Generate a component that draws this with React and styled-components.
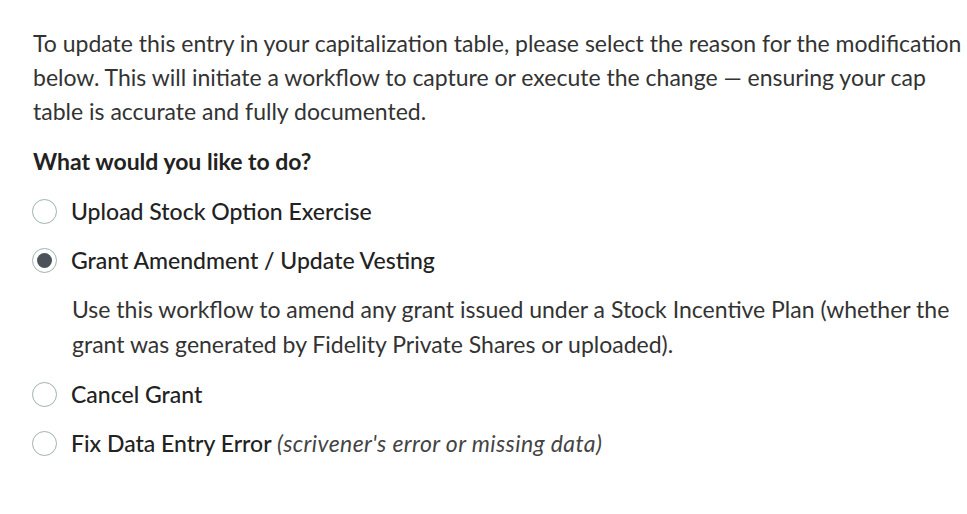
import React, { useState } from "react";
import styled, { createGlobalStyle } from "styled-components";

const GlobalStyle = createGlobalStyle`
  body {
    margin: 0;
    background: #ffffff;
    font-family: "Lato", "Open Sans", sans-serif;
    color: #333333;
  }
`;

const Container = styled.div`
  padding: 26px 0 0 33px;
  width: 930px;
`;

const Intro = styled.p`
  margin: 0;
  font-size: 23px;
  line-height: 34px;
  color: #333333;
`;

const Question = styled.h3`
  margin: 16px 0 0;
  font-size: 23px;
  line-height: 34px;
  font-weight: 700;
  color: #222222;
`;

const OptionList = styled.div`
  display: flex;
  flex-direction: column;
  margin-top: 16px;
`;

const OptionRow = styled.label`
  display: flex;
  align-items: center;
  gap: 14px;
  height: 34px;
  margin-bottom: 15px;
  cursor: pointer;
  font-size: 23px;
  font-weight: 500;
  color: #222222;
`;

const Radio = styled.span`
  box-sizing: border-box;
  width: 25px;
  height: 25px;
  flex-shrink: 0;
  margin-left: -1px;
  border-radius: 50%;
  border: 1.5px solid #9fb1b1;
  background: #ffffff;
  display: flex;
  align-items: center;
  justify-content: center;

  &::after {
    content: "";
    width: 15px;
    height: 15px;
    border-radius: 50%;
    background: #4b5259;
    display: ${(props) => (props.checked ? "block" : "none")};
  }
`;

const Hint = styled.em`
  color: #444444;
  font-style: italic;
  font-weight: 400;
  letter-spacing: 0.4px;
`;

const Description = styled.p`
  margin: 0 0 15px 39px;
  font-size: 23px;
  line-height: 35px;
  color: #333333;
`;

const options = [
  { id: "exercise", label: "Upload Stock Option Exercise" },
  {
    id: "amend",
    label: "Grant Amendment / Update Vesting",
    description:
      "Use this workflow to amend any grant issued under a Stock Incentive Plan (whether the grant was generated by Fidelity Private Shares or uploaded).",
  },
  { id: "cancel", label: "Cancel Grant" },
  {
    id: "fix",
    label: "Fix Data Entry Error",
    hint: "(scrivener's error or missing data)",
  },
];

const App = () => {
  const [selected, setSelected] = useState("amend");

  return (
    <>
      <GlobalStyle />
      <Container>
        <Intro>
          To update this entry in your capitalization table, please select the
          reason for the modification below. This will initiate a workflow to
          capture or execute the change — ensuring your cap table is accurate
          and fully documented.
        </Intro>
        <Question>What would you like to do?</Question>
        <OptionList>
          {options.map((opt) => (
            <React.Fragment key={opt.id}>
              <OptionRow onClick={() => setSelected(opt.id)}>
                <Radio checked={selected === opt.id} />
                <span>
                  {opt.label} {opt.hint && <Hint>{opt.hint}</Hint>}
                </span>
              </OptionRow>
              {selected === opt.id && opt.description && (
                <Description>{opt.description}</Description>
              )}
            </React.Fragment>
          ))}
        </OptionList>
      </Container>
    </>
  );
};

export default App;
